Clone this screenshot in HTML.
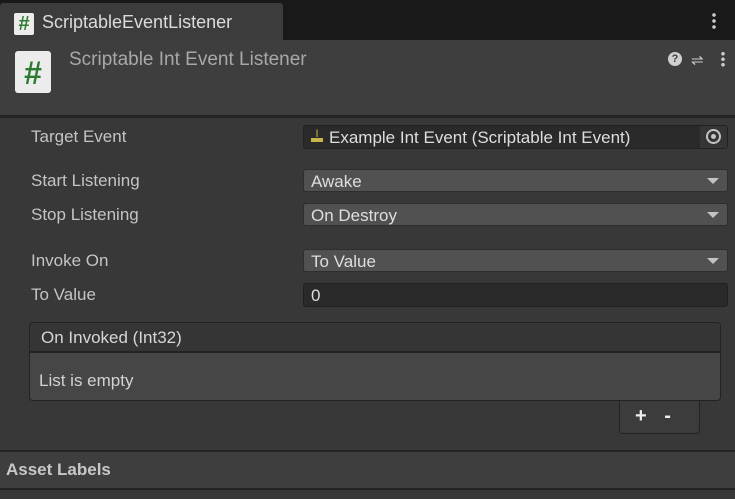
<html><head><style>
body{margin:0;width:735px;height:499px;background:#383838;font-family:"Liberation Sans",sans-serif;color:#d2d2d2;position:relative;overflow:hidden;font-size:17px}
div{position:absolute;box-sizing:border-box}
.lab{left:31px;top:0;color:#c4c4c4}
.dd{left:303px;width:425px;height:23px;background:#515151;border-radius:3px;border:1px solid #2e2e2e;padding:2px 7px;color:#dedede}
.dd:after{content:"";position:absolute;right:8px;top:8px;border-left:6px solid transparent;border-right:6px solid transparent;border-top:6px solid #c4c4c4}
</style></head><body>
<div style="left:0;top:0;width:735px;height:40px;background:#191919"></div>
<div style="left:0;top:3px;width:283px;height:37px;background:#3c3c3c;border-radius:3px 3px 0 0"></div>
<div style="left:14px;top:13px;width:20px;height:22px;background:#ececec;border-radius:2px;color:#2d7a32;font-weight:bold;font-size:20px;text-align:center;line-height:22px">#</div>
<div style="left:42px;top:12px;font-size:18px;color:#dcdcdc">ScriptableEventListener</div>
<div style="left:712px;top:12px;width:4px;height:18px;background:radial-gradient(circle,#ccc 1.6px,transparent 2px) 0 0/4px 6px"></div>
<div style="left:0;top:40px;width:735px;height:78px;background:#3e3e3e;border-bottom:3px solid #242424"></div>
<div style="left:15px;top:51px;width:36px;height:42px;background:#ececec;border-radius:3px;color:#2d7a32;font-weight:bold;font-size:32px;text-align:center;line-height:44px">#</div>
<div style="left:69px;top:49px;font-size:19px;color:#a8a8a8">Scriptable Int Event Listener</div>
<div style="left:668px;top:52px;width:14px;height:14px;border-radius:50%;background:#cfcfcf;color:#3e3e3e;font-size:11px;font-weight:bold;text-align:center;line-height:14px">?</div>
<div style="left:691px;top:51px;font-size:15px;color:#cfcfcf">⇌</div>
<div style="left:721px;top:51px;width:4px;height:16px;background:radial-gradient(circle,#ccc 1.6px,transparent 2px) 0 0/4px 5.5px"></div>
<div class="lab" style="top:127px">Target Event</div>
<div style="left:303px;top:125px;width:425px;height:24px;background:#2a2a2a;border-radius:3px;border:1px solid #222;padding:2px 0 0 25px;color:#dedede">Example Int Event (Scriptable Int Event)</div>
<div style="left:311px;top:130px;width:12px;height:12px;border-bottom:4px solid #c8b64a;color:#c8b64a;font-size:11px;line-height:8px;text-align:center">I</div>
<div style="left:700px;top:126px;width:27px;height:22px;background:#353535"></div>
<div style="left:706px;top:129px;width:15px;height:15px;border:2px solid #c4c4c4;border-radius:50%"></div>
<div style="left:711px;top:134px;width:5px;height:5px;background:#c4c4c4;border-radius:50%"></div>
<div class="lab" style="top:171px">Start Listening</div>
<div class="dd" style="top:169px">Awake</div>
<div class="lab" style="top:205px">Stop Listening</div>
<div class="dd" style="top:203px">On Destroy</div>
<div class="lab" style="top:251px">Invoke On</div>
<div class="dd" style="top:249px">To Value</div>
<div class="lab" style="top:285px">To Value</div>
<div style="left:303px;top:283px;width:425px;height:24px;background:#2a2a2a;border-radius:3px;border:1px solid #212121;padding:2px 7px;color:#dedede">0</div>
<div style="left:619px;top:398px;width:81px;height:36px;background:#3c3c3c;border:1px solid #232323;border-top:none;border-radius:0 0 4px 4px;font-weight:bold;font-size:20px;color:#eee;padding:7px 0 0 15px;word-spacing:12px">+ -</div>
<div style="left:29px;top:322px;width:692px;height:79px;background:#464646;border:1px solid #232323;border-radius:4px"></div>
<div style="left:30px;top:323px;width:690px;height:30px;background:#353535;border-bottom:2px solid #232323;border-radius:3px 3px 0 0;padding:5px 11px;color:#d6d6d6">On Invoked (Int32)</div>
<div style="left:39px;top:371px;color:#d2d2d2">List is empty</div>
<div style="left:0;top:450px;width:735px;height:40px;background:#3e3e3e;border-top:2px solid #232323;border-bottom:2px solid #232323;padding:8px 6px;font-weight:bold;color:#c8c8c8">Asset Labels</div>
</body></html>
